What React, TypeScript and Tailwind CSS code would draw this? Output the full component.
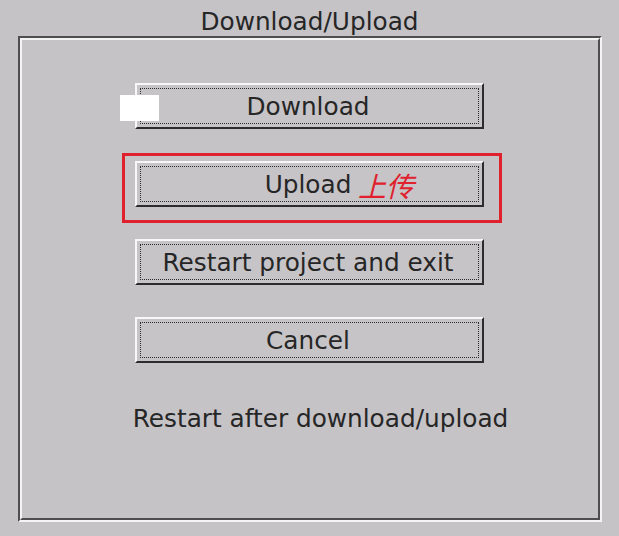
import React from "react";

const font = { fontFamily: '"DejaVu Sans", "Noto Sans CJK SC", sans-serif' };

const Btn = ({ label }: { label: string }) => (
  <div className="w-[349px] h-[46px] border-2 border-t-[#f7f7f7] border-l-[#f7f7f7] border-b-[#2c2c2c] border-r-[#2c2c2c] bg-[#c6c4c7] p-[3px]">
    <div className="w-full h-full border border-dotted border-[#2c2c2c] flex items-center justify-center text-[24.75px] text-[#262626] leading-none pr-[2px] pt-[3px]">
      {label}
    </div>
  </div>
);

const App = () => {
  return (
    <div className="relative w-[619px] h-[536px] bg-[#c5c3c6] flex flex-col" style={font}>
      <div className="h-[36px] flex items-center justify-center text-[24.75px] text-[#262626] leading-none pt-[9px]">
        Download/Upload
      </div>
      <div className="ml-[18px] w-[584px] h-[486px] border-t-2 border-l-2 border-t-[#4e4e4e] border-l-[#4e4e4e] border-b-2 border-r-2 border-b-[#f4f4f4] border-r-[#f4f4f4]">
        <div className="w-full h-full border-t-2 border-l-2 border-t-[#f4f4f4] border-l-[#f4f4f4] border-b-2 border-r-2 border-b-[#4e4e4e] border-r-[#4e4e4e] flex flex-col items-center pt-[43px] pr-[2px]">
          <div className="flex flex-col gap-[32px]">
            <Btn label="Download" />
            <Btn label="Upload" />
            <Btn label="Restart project and exit" />
            <Btn label="Cancel" />
          </div>
          <div className="mt-[44px] text-[24.75px] text-[#262626] leading-none ml-[23px]">
            Restart after download/upload
          </div>
        </div>
      </div>

      {/* overlays */}
      <div className="absolute left-[120px] top-[95px] w-[39px] h-[26px] bg-white" />
      <div className="absolute left-[122px] top-[153px] w-[380px] h-[70px] border-[3px] border-[#e0212d]" />
      <div
        className="absolute left-[358px] top-[171px] text-[28px] italic text-[#e0212d] leading-none"
        style={{ fontFamily: '"Noto Sans CJK SC", sans-serif' }}
      >
        上传
      </div>
    </div>
  );
};

export default App;
